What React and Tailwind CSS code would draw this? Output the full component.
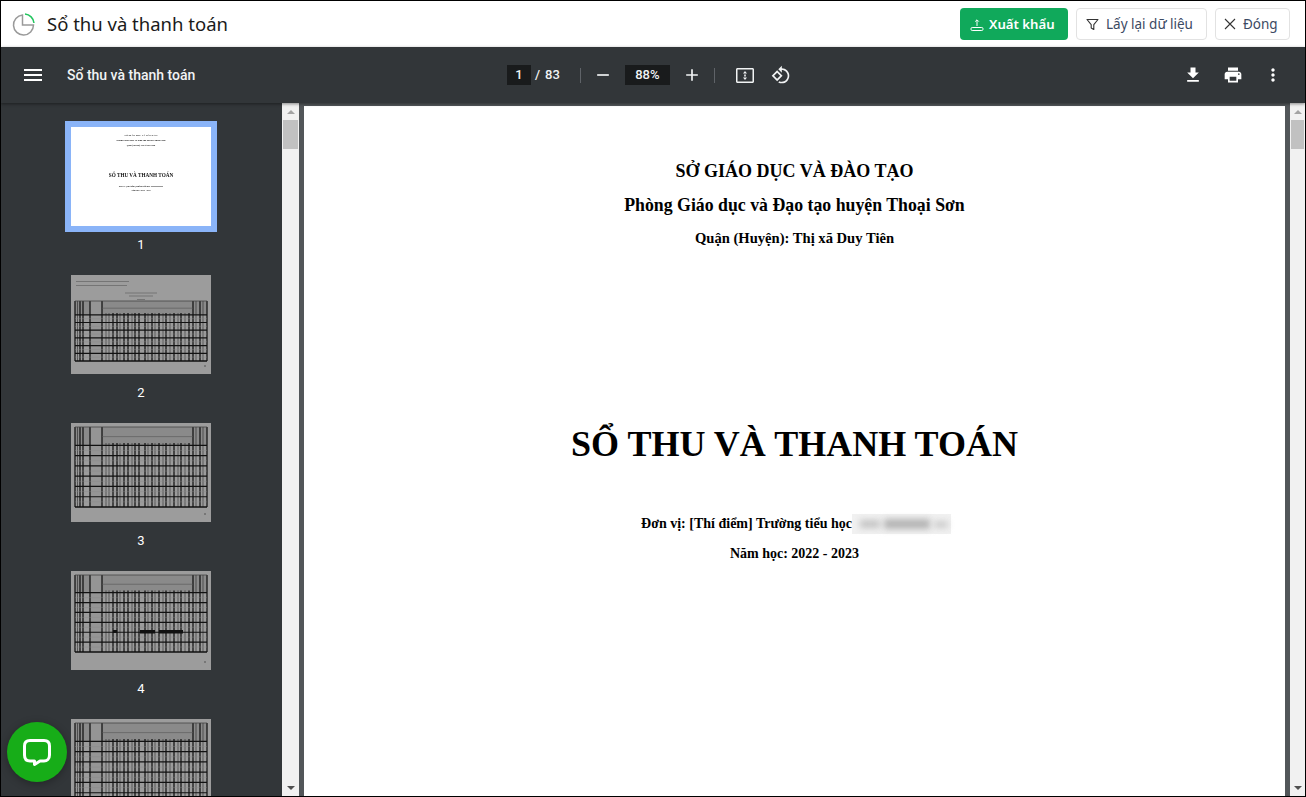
import React from "react";

const Icon = ({ d, size = 24, className = "" }) => (
  <svg width={size} height={size} viewBox="0 0 24 24" fill="currentColor" className={"block shrink-0 " + className}>
    <path d={d} />
  </svg>
);

const P = {
  menu: "M3 18h18v-2H3v2zm0-5h18v-2H3v2zm0-7v2h18V6H3z",
  download: "M19 9h-4V3H9v6H5l7 7 7-7zM5 18v2h14v-2H5z",
  print: "M19 8H5c-1.66 0-3 1.34-3 3v6h4v4h12v-4h4v-6c0-1.66-1.34-3-3-3zm-3 11H8v-5h8v5zm3-7c-.55 0-1-.45-1-1s.45-1 1-1 1 .45 1 1-.45 1-1 1zm-1-9H6v4h12V3z",
  more: "M12 8c1.1 0 2-.9 2-2s-.9-2-2-2-2 .9-2 2 .9 2 2 2zm0 2c-1.1 0-2 .9-2 2s.9 2 2 2 2-.9 2-2-.9-2-2-2zm0 6c-1.1 0-2 .9-2 2s.9 2 2 2 2-.9 2-2-.9-2-2-2z",
  rotate: "M7.34 6.41L.86 12.9l6.49 6.48 6.49-6.48-6.5-6.49zM3.69 12.9l3.66-3.66L11 12.9l-3.66 3.66-3.65-3.66zm15.67-6.26C17.61 4.88 15.3 4 13 4V.76L8.76 5 13 9.24V6c1.79 0 3.58.68 4.95 2.05 2.73 2.73 2.73 7.17 0 9.9C16.58 19.32 14.79 20 13 20c-.97 0-1.94-.21-2.84-.61l-1.49 1.49C10.02 21.62 11.51 22 13 22c2.3 0 4.61-.88 6.36-2.64 3.52-3.51 3.52-9.21 0-12.72z",
};

const range = (a, b, s) => {
  const r = [];
  for (let v = a; v <= b + 0.001; v += s) r.push(v);
  return r;
};

const COLS = [4, 6.5, 9, 12, 19, 31, 35, 38, 42, 46, 49, 53, 57, 61, 64, 68, 74, 77, 81, 84, 88, 92, 95, 99, 103, 107, 110, 114, 118, 122, 125, 129, 132, 136];
const HEAVY = new Set([4, 9, 12, 19, 31, 42, 46, 53, 57, 64, 68, 74, 81, 88, 95, 103, 110, 118, 122, 129, 136]);

function TableThumb({ top, bottom, heading, mark }) {
  const h = bottom - top;
  const rows = range(top + h * 0.23, bottom, (h * 0.77) / 6);
  const half = rows.slice(0, -1).map((y, i) => y + (rows[i + 1] - y) / 2);
  return (
    <svg viewBox="0 0 140 99" width="140" height="99" className="block bg-[#9c9c9c] shrink-0">
      <g className="blur-[0.45px]">
        {heading && (
          <g stroke="#757575" strokeWidth="1">
            <line x1="5" y1="6.5" x2="58" y2="6.5" />
            <line x1="5" y1="10.5" x2="56" y2="10.5" />
            <line x1="54" y1="18" x2="86" y2="18" />
            <line x1="58" y1="21" x2="82" y2="21" />
            <line x1="66" y1="24.5" x2="74" y2="24.5" />
          </g>
        )}
        <rect x="4" y={top} width="132" height={h * 0.23} fill="#8a8a8a" />
        <rect x="19" y={top} width="12" height={h} fill="#959595" />
        <g stroke="#111">
          {COLS.map((x) => (
            <line
              key={x}
              x1={x}
              y1={x > 31 && x < 122 ? top + h * 0.2 : top}
              x2={x}
              y2={bottom}
              strokeWidth={HEAVY.has(x) ? 1.25 : 0.5}
            />
          ))}
          {rows.map((y) => (
            <line key={y} x1="4" y1={y} x2="136" y2={y} strokeWidth="1.2" />
          ))}
          {half.map((y) => (
            <line key={y} x1="4" y1={y} x2="136" y2={y} stroke="#888" strokeWidth="0.4" />
          ))}
          <line x1="4" y1={top} x2="136" y2={top} stroke="#444" strokeWidth="0.8" />
          <line x1="31" y1={top + h * 0.12} x2="122" y2={top + h * 0.12} stroke="#555" strokeWidth="0.6" />
          <line x1="4" y1={bottom} x2="136" y2={bottom} strokeWidth="1.1" />
        </g>
        {mark && (
          <g fill="#111">
            <rect x="42" y="59" width="4" height="3" />
            <rect x="69" y="59" width="15" height="3.5" />
            <rect x="88" y="59" width="24" height="3.5" />
          </g>
        )}
        <rect x="133" y="90" width="2" height="2" fill="#777" />
      </g>
    </svg>
  );
}

function FirstThumb() {
  return (
    <div className="w-[152px] h-[111px] shrink-0 border-[6px] border-[#8ab4f8] bg-white">
      <div className="w-full h-full flex flex-col items-center font-['Liberation_Serif',serif] font-bold text-[#111] blur-[0.4px] pt-[7px] leading-[3px]">
        <div className="text-[2.5px] h-[3px]">SỞ GIÁO DỤC VÀ ĐÀO TẠO</div>
        <div className="text-[2.56px] h-[3px] mt-[2px]">Phòng Giáo dục và Đạo tạo huyện Thoại Sơn</div>
        <div className="text-[2.1px] h-[3px] mt-[1.5px]">Quận (Huyện): Thị xã Duy Tiên</div>
        <div className="text-[5.2px] h-[6px] leading-[6px] mt-[25.5px]">SỔ THU VÀ THANH TOÁN</div>
        <div className="text-[2.1px] h-[3px] mt-[6.5px] flex items-center">
          Đơn vị: [Thí điểm] Trường tiểu học
          <span className="w-[12px] h-[1px] ml-[1px] bg-[#999]" />
        </div>
        <div className="text-[2.1px] h-[3px] mt-[1px]">Năm học: 2022 - 2023</div>
      </div>
    </div>
  );
}

function Scrollbar({ className = "" }) {
  return (
    <div className={"h-full bg-[#f1f1f1] flex flex-col items-center shrink-0 " + className}>
      <div className="h-[17px] w-full flex items-center justify-center">
        <div className="w-0 h-0 border-x-[4px] border-x-transparent border-b-[4px] border-b-[#a3a3a3]" />
      </div>
      <div className="w-full px-px">
        <div className="h-[29px] bg-[#c1c1c1]" />
      </div>
      <div className="mt-auto h-[17px] w-full flex items-center justify-center">
        <div className="w-0 h-0 border-x-[4px] border-x-transparent border-t-[4px] border-t-[#505050]" />
      </div>
    </div>
  );
}

export default function App() {
  const roboto = "font-['Roboto',sans-serif]";
  const noto = "font-['Noto_Sans',sans-serif]";
  const label = "mt-[9px] h-[20px] mb-[20px] shrink-0 flex items-center justify-center text-[13px] text-white " + roboto;
  return (
    <div className="relative w-[1306px] h-[797px] border border-black bg-white flex flex-col overflow-hidden">
      {/* App header */}
      <header className={"h-[46px] shrink-0 bg-white flex items-center pl-[11px] pr-[15px] " + noto}>
        <svg width="23" height="23" viewBox="0 0 23 23" fill="none" className="shrink-0">
          <path d="M10.5 2 A10 10 0 1 0 21.5 12 H10.5 Z" stroke="#9a9a9a" strokeWidth="1.5" />
          <path d="M13 1 A10 10 0 0 1 22 10" stroke="#22c55e" strokeWidth="1.5" />
        </svg>
        <span className="ml-[12px] text-[18.5px] text-[#1a1a1a]">Sổ thu và thanh toán</span>
        <div className="ml-auto flex items-center gap-2">
          <button className="w-[108px] h-[32px] pl-[10px] pt-px rounded bg-[#10a95b] text-white text-[13.2px] font-semibold flex items-center gap-[5px]">
            <svg width="14" height="14" viewBox="0 0 14 14" fill="none" stroke="currentColor" strokeWidth="1">
              <path d="M7 8V2M5.2 3.6L7 1.8L8.8 3.6" />
              <rect x="1" y="9.5" width="12" height="3" rx="1.2" />
            </svg>
            Xuất khẩu
          </button>
          <button className="w-[131px] h-[32px] pl-[9px] rounded border border-[#e2e2e2] bg-white text-[#3b4a63] text-[13.5px] flex items-center gap-[7px]">
            <svg width="13" height="13" viewBox="0 0 13 13" fill="none" stroke="#333" strokeWidth="1.1" strokeLinejoin="round">
              <path d="M1 1.5H12L7.8 6.6V11.5L5.2 10V6.6Z" />
            </svg>
            Lấy lại dữ liệu
          </button>
          <button className="w-[75px] h-[32px] pl-[8px] rounded border border-[#e2e2e2] bg-white text-[#3b4a63] text-[13.5px] flex items-center gap-[7px]">
            <svg width="12" height="12" viewBox="0 0 12 12" fill="none" stroke="#333" strokeWidth="1.1">
              <path d="M1 1L11 11M11 1L1 11" />
            </svg>
            Đóng
          </button>
        </div>
      </header>

      {/* PDF toolbar */}
      <div className={"relative z-10 h-[56px] shrink-0 bg-[#323639] text-white flex items-center shadow-[0_1px_3px_rgba(0,0,0,0.45)] " + roboto}>
        <div className="w-[506px] shrink-0 flex items-center pl-[20px]">
          <Icon d={P.menu} />
          <span className="ml-[22px] text-[14px] font-medium text-[#f1f3f4]">Sổ thu và thanh toán</span>
        </div>
        <div className="flex items-center text-[13px] font-medium text-[#f1f3f4]">
          <div className="w-[24px] h-[20px] bg-[#191b1c] flex items-center justify-center">1</div>
          <span className="ml-[4px]">/</span>
          <span className="ml-[5px]">83</span>
          <div className="ml-[20px] w-px h-[15px] bg-[#5f6368]" />
          <Icon d="M5 11h14v2H5z" size={20} className="ml-[12px]" />
          <div className="ml-[12px] w-[45px] h-[20px] bg-[#191b1c] flex items-center justify-center">88%</div>
          <Icon d="M19 13h-6v6h-2v-6H5v-2h6V5h2v6h6v2z" size={20} className="ml-[12px]" />
          <div className="ml-[12px] w-px h-[15px] bg-[#5f6368]" />
          <svg width="20" height="17" viewBox="0 0 20 17" fill="currentColor" className="ml-[20px]">
            <path d="M2.5 1H17.5C18.3 1 19 1.7 19 2.5V14.5C19 15.3 18.3 16 17.5 16H2.5C1.7 16 1 15.3 1 14.5V2.5C1 1.7 1.7 1 2.5 1ZM2.5 2.5V14.5H17.5V2.5Z" />
            <path d="M10 4L12 6.5H8ZM10 13L8 10.5H12ZM9.2 7.5H10.8V9.5H9.2Z" />
          </svg>
          <Icon d={P.rotate} size={20} className="ml-[16px]" />
        </div>
        <div className="ml-auto flex items-center gap-[20px] pr-[22px]">
          <Icon d={P.download} size={20} />
          <Icon d={P.print} size={20} />
          <Icon d={P.more} size={20} />
        </div>
      </div>

      {/* Body */}
      <div className="flex-1 min-h-0 flex bg-[#525659]">
        <aside className="w-[281px] shrink-0 h-full bg-[#323639] overflow-hidden flex flex-col items-center pt-[18px] pr-[1px]">
          <FirstThumb />
          <div className={"mt-[3px] h-[20px] mb-[20px] shrink-0 flex items-center justify-center text-[13px] text-white " + roboto}>1</div>
          <TableThumb top={26} bottom={86} heading />
          <div className={label}>2</div>
          <TableThumb top={4} bottom={84} />
          <div className={label}>3</div>
          <TableThumb top={4} bottom={81} mark />
          <div className={label}>4</div>
          <TableThumb top={4} bottom={84} />
        </aside>
        <Scrollbar className="w-[17px]" />

        <main className="flex-1 h-full pl-[5px] pr-[5px] pt-[3px] flex min-w-0">
          <div className="w-[981px] h-full bg-white font-['Liberation_Serif',serif] font-bold text-black flex flex-col items-center shrink-0">
            <div className="mt-[54px] text-[18px] leading-[22px]">SỞ GIÁO DỤC VÀ ĐÀO TẠO</div>
            <div className="mt-[12px] text-[17.8px] leading-[22px]">Phòng Giáo dục và Đạo tạo huyện Thoại Sơn</div>
            <div className="mt-[14px] text-[14.6px] leading-[16px]">Quận (Huyện): Thị xã Duy Tiên</div>
            <div className="mt-[177px] text-[36px] leading-[42px]">SỔ THU VÀ THANH TOÁN</div>
            <div className="mt-[49px] pl-[3px] text-[14px] leading-[20px] flex items-center">
              <span>Đơn vị: [Thí điểm] Trường tiểu học</span>
              <span className="w-[99px] h-[20px] bg-[#f1f1f1] flex items-center pl-[8px] gap-[4px]">
                <span className="w-[20px] h-[8px] bg-[#c4c4c4] blur-[3px]" />
                <span className="w-[46px] h-[10px] bg-[#b4b4b4] blur-[3px]" />
                <span className="w-[14px] h-[7px] bg-[#cccccc] blur-[3px]" />
              </span>
            </div>
            <div className="mt-[12px] text-[14px] leading-[16px]">Năm học: 2022 - 2023</div>
          </div>
        </main>
        <Scrollbar className="w-[15px]" />
      </div>

      {/* Chat bubble */}
      <div className="absolute left-[6px] top-[721px] w-[60px] h-[60px] rounded-full bg-[#17ad18] shadow-[0_2px_8px_rgba(0,0,0,0.3)] flex items-center justify-center">
        <svg width="30" height="30" viewBox="0 0 30 30" fill="none">
          <path d="M8 3.5H22C25.5 3.5 27.5 5.5 27.5 9V18C27.5 22 25 24 22 24H18L12.5 27.5V24H8C4.5 24 2.5 22 2.5 18V9C2.5 5.5 4.5 3.5 8 3.5Z" stroke="white" strokeWidth="3" strokeLinejoin="round" />
        </svg>
      </div>
    </div>
  );
}
